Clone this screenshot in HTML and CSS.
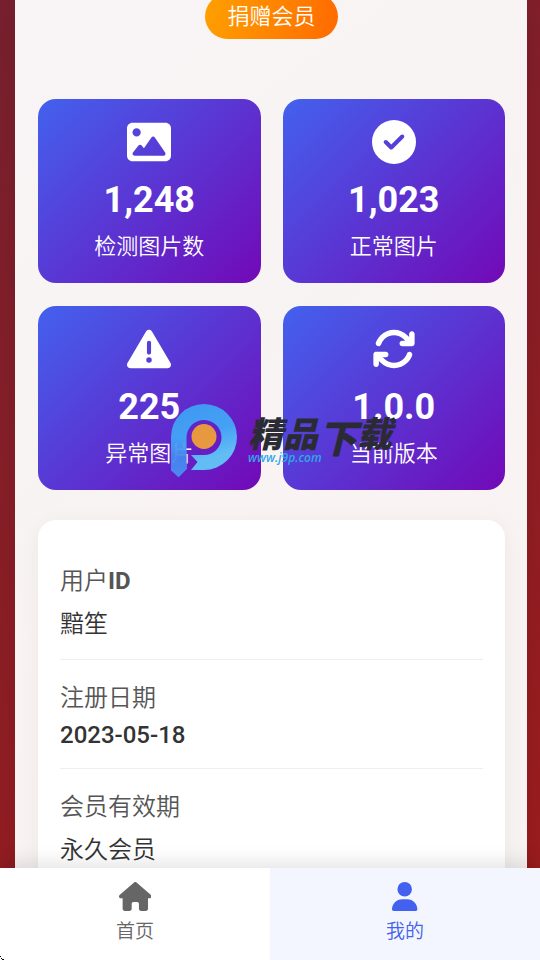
FILE: index.html
```html
<!DOCTYPE html>
<html lang="zh-CN">
<head>
<meta charset="utf-8">
<meta name="viewport" content="width=device-width, initial-scale=1">
<title>我的</title>
<link rel="stylesheet" href="styles.css">
</head>
<body>
<main class="page">
  <div class="panel">
    <div class="badge">捐赠会员</div>

    <section class="stats">
      <article class="stat">
        <svg class="stat-icon" viewBox="0 0 512 512" aria-hidden="true"><path d="M0 96C0 60.7 28.7 32 64 32H448c35.3 0 64 28.7 64 64V416c0 35.3-28.7 64-64 64H64c-35.3 0-64-28.7-64-64V96zM323.8 202.5c-4.5-6.6-11.9-10.5-19.8-10.5s-15.4 3.9-19.8 10.5l-87 127.6L170.7 297c-4.6-5.7-11.5-9-18.7-9s-14.2 3.3-18.7 9l-64 80c-5.8 7.2-6.9 17.1-2.9 25.4s12.4 13.6 21.6 13.6h96 32H424c8.9 0 17.1-4.9 21.2-12.8s3.6-17.4-1.4-24.7l-120-176zM112 192a48 48 0 1 0 0-96 48 48 0 1 0 0 96z"/></svg>
        <div class="stat-value">1,248</div>
        <div class="stat-label">检测图片数</div>
      </article>
      <article class="stat">
        <svg class="stat-icon" viewBox="0 0 512 512" aria-hidden="true"><path d="M256 512A256 256 0 1 0 256 0a256 256 0 1 0 0 512zM369 209L241 337c-9.4 9.4-24.6 9.4-33.9 0l-64-64c-9.4-9.4-9.4-24.6 0-33.9s24.6-9.4 33.9 0l47 47L335 175c9.4-9.4 24.6-9.4 33.9 0s9.4 24.6 0 33.9z"/></svg>
        <div class="stat-value">1,023</div>
        <div class="stat-label">正常图片</div>
      </article>
      <article class="stat">
        <svg class="stat-icon" viewBox="0 0 512 512" aria-hidden="true"><path d="M256 32c14.2 0 27.3 7.5 34.5 19.8l216 368c7.3 12.4 7.3 27.7 .2 40.1S486.3 480 472 480H40c-14.3 0-27.6-7.7-34.7-20.1s-7-27.8 .2-40.1l216-368C228.7 39.5 241.8 32 256 32zm0 128c-13.3 0-24 10.7-24 24V296c0 13.3 10.7 24 24 24s24-10.7 24-24V184c0-13.3-10.7-24-24-24zm32 224a32 32 0 1 0 -64 0 32 32 0 1 0 64 0z"/></svg>
        <div class="stat-value">225</div>
        <div class="stat-label">异常图片</div>
      </article>
      <article class="stat">
        <svg class="stat-icon" viewBox="0 0 512 512" aria-hidden="true"><path d="M105.1 202.6c7.7-21.8 20.2-42.3 37.8-59.8c62.5-62.5 163.8-62.5 226.3 0L386.3 160H352c-17.7 0-32 14.3-32 32s14.3 32 32 32H463.5c0 0 0 0 0 0h.4c17.7 0 32-14.3 32-32V80c0-17.7-14.3-32-32-32s-32 14.3-32 32v35.2L414.4 97.6c-87.5-87.5-229.3-87.5-316.8 0C73.2 122 55.6 150.7 44.8 181.4c-5.9 16.7 2.9 34.9 19.5 40.8s34.9-2.9 40.8-19.5zM39 289.3c-5 1.5-9.8 4.2-13.7 8.2c-4 4-6.7 8.8-8.1 14c-.3 1.2-.6 2.5-.8 3.8c-.3 1.7-.4 3.4-.4 5.1V432c0 17.7 14.3 32 32 32s32-14.3 32-32V396.9l17.6 17.5 0 0c87.5 87.4 229.3 87.4 316.7 0c24.4-24.4 42.1-53.1 52.9-83.7c5.9-16.7-2.9-34.9-19.5-40.8s-34.9 2.9-40.8 19.5c-7.7 21.8-20.2 42.3-37.8 59.8c-62.5 62.5-163.8 62.5-226.3 0l-.1-.1L125.6 352H160c17.7 0 32-14.3 32-32s-14.3-32-32-32H48.4c-1.6 0-3.2 .1-4.8 .3s-3.1 .5-4.6 1z"/></svg>
        <div class="stat-value">1.0.0</div>
        <div class="stat-label">当前版本</div>
      </article>

      <div class="watermark">
        <svg class="watermark-logo" viewBox="0 0 68 75" aria-hidden="true">
          <defs>
            <linearGradient id="ring" x1="0" y1="0" x2="0.3" y2="1">
              <stop offset="0" stop-color="#3f9df3"/>
              <stop offset="0.5" stop-color="#43a8f8"/>
              <stop offset="0.85" stop-color="#62c6f8"/>
            </linearGradient>
            <linearGradient id="stem" x1="0" y1="0" x2="0" y2="1">
              <stop offset="0" stop-color="#3f86f0" stop-opacity="0"/>
              <stop offset="0.5" stop-color="#4586f0"/>
              <stop offset="1" stop-color="#4a90f4"/>
            </linearGradient>
          </defs>
          <path fill="url(#ring)" d="M1 34A33 33 0 1 1 34 67H21L27.500 59 21 52H34A17.500 17.500 0 1 0 16.500 34V66L8.500 74 1 67Z"/>
          <path fill="url(#stem)" d="M1 34H16.500V66L8.500 74 1 67Z"/>
          <circle cx="34" cy="33.500" r="12.500" fill="#f0a038"/>
        </svg>
        <div class="watermark-text">
          <div class="watermark-name">精品<span class="watermark-tall">下</span>载</div>
          <div class="watermark-url">www.j9p.com</div>
        </div>
      </div>
    </section>

    <dl class="info">
      <div class="info-row"><dt>用户<b>ID</b></dt><dd>黯笙</dd></div>
      <div class="info-row"><dt>注册日期</dt><dd class="info-date">2023-05-18</dd></div>
      <div class="info-row"><dt>会员有效期</dt><dd>永久会员</dd></div>
    </dl>
  </div>
</main>

<nav class="tabs">
  <a class="tab" href="#home">
    <svg class="tab-icon" viewBox="0 0 576 512" aria-hidden="true"><path d="M575.8 255.5c0 18-15 32.1-32 32.1h-32l.7 160.2c0 2.700-.2 5.400-.5 8.100V472c0 22.100-17.900 40-40 40H456c-1.100 0-2.200 0-3.300-.1c-1.400 .1-2.800 .1-4.200 .1H416 392c-22.100 0-40-17.900-40-40V448 384c0-17.700-14.300-32-32-32H256c-17.700 0-32 14.300-32 32v64 24c0 22.100-17.900 40-40 40H160 128.100c-1.500 0-3-.1-4.500-.2c-1.200 .1-2.400 .2-3.600 .2H104c-22.100 0-40-17.900-40-40V360c0-.9 0-1.900 .1-2.800V287.600H32c-18 0-32-14-32-32.100c0-9 3-17 10-24L266.400 8c7-7 15-8 22-8s15 2 21 7L564.800 231.500c8 7 12 15 11 24z"/></svg>
    <span>首页</span>
  </a>
  <a class="tab tab-active" href="#mine" aria-current="page">
    <svg class="tab-icon" viewBox="0 0 448 512" aria-hidden="true"><path d="M224 256A128 128 0 1 0 224 0a128 128 0 1 0 0 256zm-45.700 48C79.800 304 0 383.800 0 482.300C0 498.700 13.300 512 29.700 512H418.300c16.400 0 29.700-13.300 29.700-29.700C448 383.800 368.200 304 269.700 304H178.300z"/></svg>
    <span>我的</span>
  </a>
  <svg class="corner" viewBox="0 0 4 4" aria-hidden="true"><path d="M0 0H1V1H0ZM1 2H2V3H1ZM2 3H4V4H2Z"/></svg>
</nav>
</body>
</html>
```
FILE: styles.css
```css
* {
  box-sizing: border-box;
}

body {
  margin: 0;
  height: 100vh;
  display: flex;
  flex-direction: column;
  overflow: hidden;
  font-family: Roboto, "Noto Sans CJK SC", sans-serif;
  font-weight: 350;
  color: #333;
  background: linear-gradient(150deg, #78202f, #a01c1c);
}

.page {
  flex: 1;
  min-height: 0;
  overflow: hidden;
  padding: 0 13px 0 15px;
}

.panel {
  min-height: 100%;
  padding: 0 22px 24px 23px;
  background: linear-gradient(145deg, #f9f5f7, #f8f4f3 30%, #f9f3f4 50%, #f8f3f3);
  box-shadow: 0 0 30px rgba(0, 0, 0, 0.1);
  display: flow-root;
}

.badge {
  width: fit-content;
  margin: -6px auto 60px;
  padding: 7px 22px 6px;
  border-radius: 24px;
  background: linear-gradient(100deg, #ffa000, #ff6a00);
  color: #fff;
  font-size: 22px;
  line-height: 32px;
}

.stats {
  position: relative;
  display: grid;
  grid-template-columns: 1fr 1fr;
  gap: 23px 22px;
}

.stat {
  display: flex;
  flex-direction: column;
  align-items: center;
  padding: 21px 22px 20px;
  border-radius: 18px;
  background: linear-gradient(135deg, #4361ee, #7209b7);
  color: #fff;
}

.stat-icon {
  width: 44px;
  height: 44px;
  fill: currentColor;
}

.stat-value {
  margin: 15px 0 10px;
  font-size: 36px;
  font-weight: 700;
  line-height: 42px;
}

.stat-label {
  font-size: 22px;
  line-height: 32px;
}

.watermark {
  position: absolute;
  left: 132px;
  top: 304px;
  display: flex;
  gap: 10px;
}

.watermark-logo {
  width: 68px;
  height: 75px;
  opacity: 0.95;
}

.watermark-text {
  font-style: italic;
  white-space: nowrap;
}

.watermark-name {
  height: 47px;
  display: flex;
  align-items: flex-start;
  padding-top: 11px;
  font-family: "Noto Sans CJK SC", sans-serif;
  font-size: 35px;
  font-weight: 900;
  line-height: 36px;
  color: #2b2b35;
}

.watermark-tall {
  font-size: 39px;
  line-height: 44px;
}

.watermark-url {
  font-family: "Open Sans", sans-serif;
  font-size: 12px;
  font-weight: 600;
  line-height: 16px;
  color: #2fa8e8;
}

.info {
  margin: 30px 0 0;
  padding: 22px;
  border-radius: 18px;
  background: #fff;
  box-shadow: 0 4px 22px rgba(0, 0, 0, 0.05);
  font-size: 24px;
}

.info-row {
  display: flex;
  flex-direction: column;
  gap: 8px;
  padding: 19px 0 20px;
  border-bottom: 1px solid #eee;
}

.info-row + .info-row {
  padding: 18px 0 19px;
}

.info-row dt {
  color: #555;
}

.info-row b {
  font-weight: 700;
}

.info-row dd {
  margin: 0;
}

.info-row .info-date {
  font-weight: 500;
}

.tabs {
  position: relative;
  display: grid;
  grid-template-columns: 1fr 1fr;
  background: #fff;
  box-shadow: 0 -4px 20px rgba(0, 0, 0, 0.12);
}

.tab {
  display: flex;
  flex-direction: column;
  align-items: center;
  gap: 7px;
  padding: 14px 0;
  color: #666;
  font-size: 19px;
  line-height: 28px;
  text-decoration: none;
}

.tab-active {
  color: #4361ee;
  background: #f3f6fe;
}

.tab-icon {
  height: 29px;
  fill: currentColor;
}

.corner {
  position: absolute;
  left: 0;
  bottom: 0;
  width: 4px;
  height: 4px;
}
```
